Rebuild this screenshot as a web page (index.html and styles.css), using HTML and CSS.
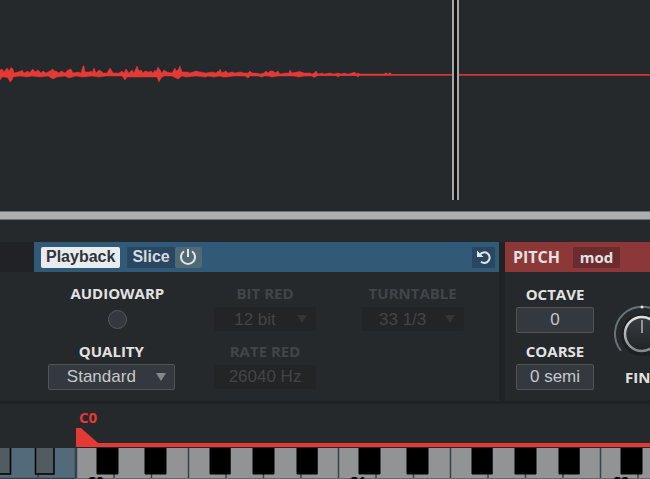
FILE: index.html
```html
<!DOCTYPE html>
<html lang="en">
<head>
<meta charset="utf-8">
<title>Sampler</title>
<link rel="stylesheet" href="styles.css">
</head>
<body>
<main class="sampler">
  <section class="wave" aria-label="Waveform">
    <svg class="wave-shape" width="400" height="40" viewBox="0 54 400 40" aria-hidden="true">
      <path d="M0 70L2 69L4 72L7 68L9 71L11 67.500L13 69L14 73L18 72L21 71L22 70L24 73L28 71L29 73L33 69L35 72L38 70L41 73L43 71L46 73L50 71L53 69L54 71L56 71L59 73L61 71L65 73L68 70L71 69L73 73L78 72L81 73L83 66H84L85 72L89 72L91 71L92 73L94 68L96 73L99 70L101 71L103 73L107 73L110 68L113 73L119 73L122 71L124 73L126 69L129 73L132 70L134 73L137 66L139 71L141 70L143 73L145 71L149 72L151 71L153 73L155 70L156 72L158 67L160 70L162 73L164 70L167 72L172 73L175 68L176 71L178 70L180 66L182 72L187 72L190 73L196 71L200 72L206 73L212 72L216 73L218 71L219 72L220 69L222 73L226 71L228 73L232 72L235 73L240 72L244 73L248 73L250 71L252 73L256 73L260 74L264 73L266 71L268 73L270 71L273 71L275 73L278 71L280 74L286 73L289 73L290 70L292 73L297 72L300 71.500L304 73L310 73L312 74L314 73L316 71L318 74L322 73L324 74L330 73L334 74L338 73L341 74L344 73L348 74L352 73L355 72L356 74L358 73L360 74H385V73H387V74H389V73H391V74V75H360L358 77L356 75.500H340L338 77L336 75.500H318L314 77.500L312 76H304L299 77L294 76H278L272 77L268 76H264L262 77L258 76H250L248 78L245 76H234L226 77L223 77L220 76L214 77L208 76L206 77L196 76L186 77L182 76L178 79L176 78L172 76H164L161 78L159 82L157 77H145L137 77L127 77L125 80L122 76H106L99 77L92 76L83 77L76 76L69 78L65 76L57 77L53 79L48 76L40 77L32 76L27 77L20 76L13 77L12 80L10 82L8 78L5 77L2 77L0 80Z"/>
    </svg>
    <div class="playhead"></div>
  </section>
  <div class="scrollbar"></div>

  <div class="panels">
    <div class="stub"></div>

    <section class="panel">
      <header class="bar bar-blue">
        <button class="tab tab-on" type="button">Playback</button>
        <div class="slice">
          <button class="tab" type="button">Slice</button>
          <button class="power" type="button" aria-label="Enable slice">
            <svg width="18" height="18" viewBox="0 0 18 18"><path d="M5 3.300A7 7 0 1 0 13 3.300M9 1V9"/></svg>
          </button>
        </div>
        <button class="reset" type="button" aria-label="Reset">
          <svg width="16" height="16" viewBox="0 0 16 16"><path class="line" d="M4 5.500A5.300 5.300 0 1 1 5 12.800"/><path class="head" d="M1 1.500V8H7.500Z"/></svg>
        </button>
      </header>
      <div class="fields">
        <div class="field field-warp">
          <label for="warp">AUDIOWARP</label>
          <div class="control"><input class="dot" id="warp" type="checkbox"></div>
        </div>
        <div class="field off">
          <label for="bits">BIT RED</label>
          <div class="control arrow"><select id="bits" disabled><option>12 bit</option></select></div>
        </div>
        <div class="field off">
          <label for="turn">TURNTABLE</label>
          <div class="control arrow"><select id="turn" disabled><option>33 1/3</option></select></div>
        </div>
        <div class="field wide">
          <label for="quality">QUALITY</label>
          <div class="control arrow"><select id="quality"><option>Standard</option></select></div>
        </div>
        <div class="field off">
          <label for="rate">RATE RED</label>
          <div class="control"><input id="rate" type="text" value="26040 Hz" disabled></div>
        </div>
      </div>
    </section>

    <section class="panel pitch">
      <header class="bar bar-red">
        <h2>PITCH</h2>
        <button class="mod" type="button">mod</button>
      </header>
      <div class="pitch-body">
        <div class="pitch-values">
          <div class="field">
            <label for="octave">OCTAVE</label>
            <div class="control"><input id="octave" type="text" value="0"></div>
          </div>
          <div class="field">
            <label for="coarse">COARSE</label>
            <div class="control"><input id="coarse" type="text" value="0 semi"></div>
          </div>
        </div>
        <div class="knob">
          <div class="knob-face">
            <svg width="60" height="60" viewBox="0 0 60 60" aria-hidden="true">
              <defs>
                <linearGradient id="rim" x1="0" y1="0" x2="0" y2="1"><stop offset="0" stop-color="#e0e0e0"/><stop offset="1" stop-color="#85878a"/></linearGradient>
                <linearGradient id="cap" x1="0" y1="0" x2="0" y2="1"><stop offset="0" stop-color="#383c40"/><stop offset="1" stop-color="#202427"/></linearGradient>
              </defs>
              <path class="arc" d="M8.500 46A27 27 0 1 1 51.500 46"/>
              <circle class="shade" cx="30" cy="31" r="21"/>
              <circle cx="30" cy="30" r="17" fill="url(#cap)" stroke="url(#rim)" stroke-width="2.500"/>
              <path class="needle" d="M30 16V29"/>
              <circle class="mark" cx="30" cy="3" r="1.500"/>
            </svg>
            <input id="fine" type="range" min="-100" max="100" value="0">
          </div>
          <label for="fine">FINE</label>
        </div>
      </div>
    </section>
  </div>

  <section class="range" aria-label="Key range">
    <span class="range-note">C0</span>
    <svg class="flag" width="22" height="15" viewBox="0 0 22 15" aria-hidden="true"><path d="M0 0H5L22 15H0Z"/></svg>
    <div class="range-line"></div>
  </section>

  <section class="keys" aria-label="Keyboard">
    <svg width="1126" height="31" viewBox="0 0 1126 31">
      <defs>
        <g id="octave-keys">
          <path class="white" d="M0 0H262.500V31H0Z"/>
          <path class="split" d="M.5 0V31M38 0V31M75.500 0V31M112.500 0V31M150 0V31M187.500 0V31M225 0V31"/>
          <path class="edge" d="M20 0H43V26H20ZM68 0H91V26H68ZM133 0H155V26H133ZM176 0H199V26H176ZM220 0H242V26H220Z"/>
          <path class="black" d="M21 0H42V26.500H21ZM69 0H90V26.500H69ZM134 0H154.500V26.500H134ZM177 0H198V26.500H177ZM221 0H241.500V26.500H221Z"/>
          <path class="foot" d="M0 30.500H262.500"/>
        </g>
      </defs>
      <path class="low" d="M0 0H76V31H0Z"/>
      <path class="split" d="M38 26V31M75.500 0V31M0 30.500H76"/>
      <path class="low-black" d="M-5 -1H10.500V26H-5ZM35.500 -1H54V26H35.500Z"/>
      <use href="#octave-keys" x="76"/>
      <use href="#octave-keys" x="338"/>
      <use href="#octave-keys" x="600"/>
      <use href="#octave-keys" x="862"/>
      <text x="87" y="39">C0</text>
      <text x="349" y="39">C1</text>
      <text x="612" y="39">C2</text>
    </svg>
  </section>
</main>
</body>
</html>
```

FILE: styles.css
```css
* { box-sizing: border-box; }

body {
  margin: 0;
  background: #25292c;
  color: #e2e2e2;
  font-family: "Open Sans", "Noto Sans", sans-serif;
  font-size: 15px;
  overflow: hidden;
}

button, input, select { margin: 0; padding: 0; border: 0; font: inherit; color: inherit; }
button { cursor: pointer; }
label, h2 { font-weight: 700; line-height: 18px; white-space: nowrap; }

/* waveform */
.wave {
  position: relative;
  height: 211px;
  padding-top: 54px;
  background: linear-gradient(#e53936, #8c3032) 0 74px / 100% 2px no-repeat;
}
.wave-shape { display: block; fill: #e53936; stroke: #e53936; stroke-width: 0.5; }
.playhead {
  position: absolute;
  top: 0;
  left: 452px;
  width: 7px;
  height: 200px;
  background: #111;
  border: solid #a5a7a8;
  border-width: 0 2px;
}
.scrollbar {
  height: 9px;
  background: #adaeaf;
  border: solid #6e7173;
  border-width: 1px 0;
}

/* panels */
.panels {
  display: grid;
  grid-template-columns: 34px minmax(0, 465fr) minmax(0, 151fr);
  margin-top: 22px;
  border-bottom: 3px solid #1f2124;
}
.stub { height: 30px; background: #212225; }
.pitch { border-left: 6px solid #202225; overflow: hidden; }
.bar { display: flex; align-items: center; height: 30px; }
.bar-blue { background: #315a78; padding: 0 4px 0 7px; }
.bar-red { background: #8c3839; padding-left: 8px; gap: 13px; }
.tab {
  height: 21px;
  padding: 0 5px;
  border-radius: 2px;
  background: #294760;
  color: #d5dade;
  font: 700 16px/20px "Liberation Sans", sans-serif;
}
.tab-on { background: #e9ecef; color: #303439; }
.slice { display: flex; margin-left: 7px; background: #294760; border-radius: 2px; }
.power {
  display: grid;
  place-items: center;
  width: 27px;
  height: 21px;
  background: #506974;
  border-radius: 2px;
}
.power path, .reset .line { fill: none; stroke: #e2e4e5; stroke-width: 2; }
.reset {
  display: grid;
  place-items: center;
  width: 23px;
  height: 21px;
  margin-left: auto;
  background: #294760;
}
.reset .head { fill: #e2e4e5; }
.bar h2 { margin: 0; font-size: 16px; }
.mod { width: 47px; height: 21px; background: #6b2c2f; font-weight: 700; line-height: 18px; }

/* fields */
.fields {
  display: grid;
  grid-template-columns: 154fr 152fr 142fr;
  row-gap: 10px;
  padding: 12px 15px 11px 0;
}
.field { display: flex; flex-direction: column; align-items: center; gap: 4px; }
.field-warp { padding-left: 12px; }
.control { position: relative; display: flex; align-items: center; width: 102px; height: 26px; }
.wide .control { width: 127px; }
.control select, .control input {
  appearance: none;
  width: 100%;
  height: 26px;
  background: #343940;
  border: 1px solid #515457;
  border-radius: 2px;
  color: #c6c8ca;
  font: 17px/24px "Liberation Sans", sans-serif;
  text-align: center;
  text-align-last: center;
}
.control select { padding-right: 20px; }
.arrow::after {
  content: "";
  position: absolute;
  right: 9px;
  border: solid transparent;
  border-width: 8px 5px 0;
  border-top-color: #85888b;
}
.off label { color: #424548; }
.off .control select, .off .control input {
  height: 24px;
  background: #222426;
  border-color: #222426;
  color: #424548;
  opacity: 1;
}
.off .arrow::after { border-top-color: #333639; }
.control .dot { width: 19px; height: 19px; margin: 0 auto; border: 1px solid #56595b; border-radius: 50%; }

.pitch-body { display: flex; gap: 18px; padding: 13px 0 11px 11px; }
.pitch-values { display: grid; row-gap: 9px; }
.pitch-values .control { width: 78px; }
.knob { display: flex; flex-direction: column; align-items: center; padding-top: 19px; gap: 4px; }
.knob-face { position: relative; height: 60px; }
.knob-face input { position: absolute; inset: 0; width: 60px; height: 60px; opacity: 0; }
.arc { fill: none; stroke: #64737c; stroke-width: 2; stroke-linecap: round; }
.shade { fill: #1d2023; }
.needle { stroke: #929496; stroke-width: 2; }
.mark { fill: #e4e4e4; }

/* key range and keyboard */
.range { display: flex; flex-direction: column; height: 43px; padding-left: 76px; }
.range-note { height: 24px; padding-left: 3px; color: #e53936; font-weight: 700; line-height: 26px; }
.flag { display: block; fill: #e53936; }
.range-line { height: 4px; background: #e53936; }
.keys { overflow: hidden; height: 32px; border-top: 1px solid #25292c; }
.keys svg { display: block; }
.keys text { font: 700 14px "Open Sans", sans-serif; fill: #000; }
.white { fill: #929395; }
.split { fill: none; stroke: #35434c; stroke-width: 1.5; }
.edge { fill: #444a4e; }
.black { fill: #000; }
.foot { stroke: #66696b; }
.low { fill: #516b7b; }
.low-black { fill: #505b62; stroke: #000; stroke-width: 1.5; }
```
